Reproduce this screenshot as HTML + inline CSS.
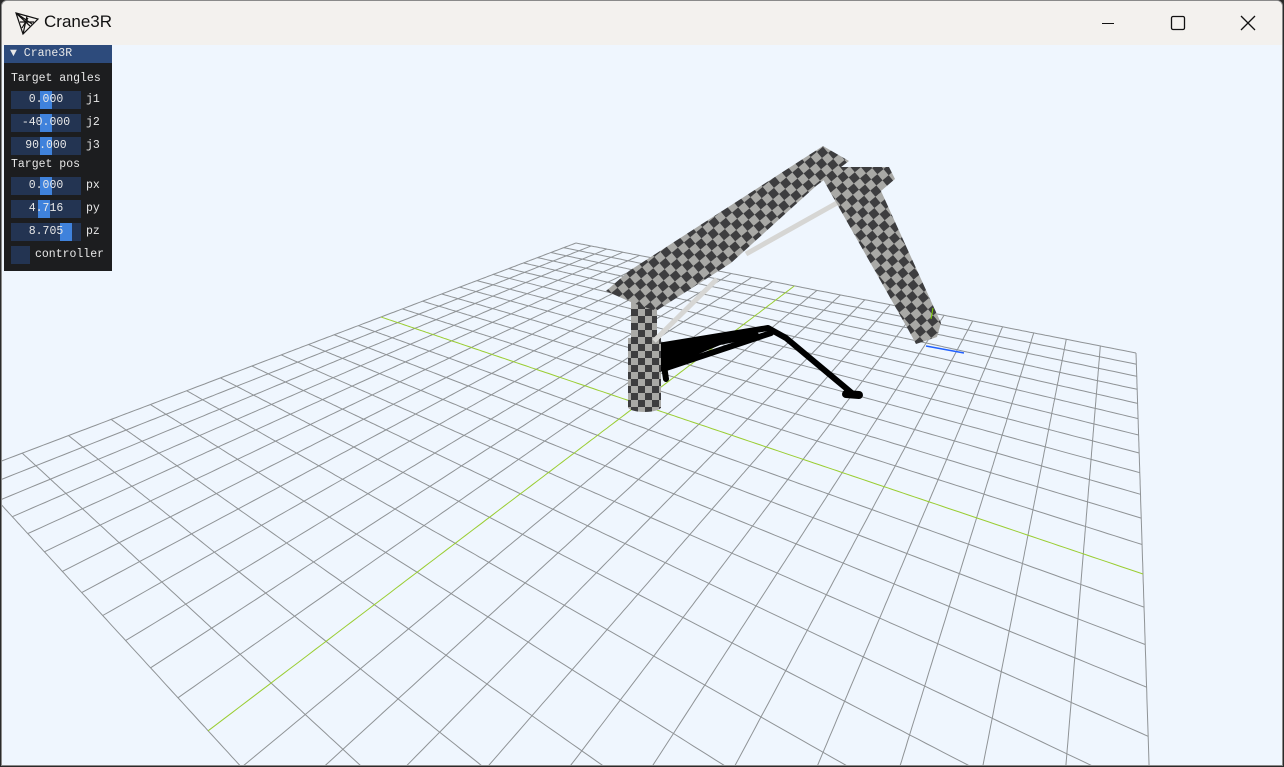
<!DOCTYPE html>
<html><head><meta charset="utf-8"><style>
html,body{margin:0;padding:0;width:1284px;height:767px;overflow:hidden;background:#2a2a2a;font-family:"Liberation Sans",sans-serif}
#win{position:absolute;left:1px;top:0;width:1282px;height:766px;background:#eff6fe;border:1px solid #8a8a8a;box-sizing:border-box;border-radius:6px 6px 0 0;overflow:hidden}
#title{position:absolute;left:0;top:0;width:100%;height:44px;background:#f3f1ee}
#title .t{position:absolute;left:42px;top:11px;font-size:17px;color:#111}
#panel{position:absolute;left:2px;top:44px;width:108px;height:226px;background:#1c1d1f;font-family:"Liberation Mono",monospace;font-size:11.5px;color:#e8e8e8}
#hdr{height:18px;background:#2d4b7c;line-height:18px;padding-left:6px}
.lbl{position:absolute;left:7px}
.inp{position:absolute;left:7px;width:70px;height:18px;background:#233452;text-align:center;line-height:18px}
.grab{position:absolute;top:0;height:18px;width:12px;background:#3f82dc}
.inp span{position:relative}
.sfx{position:absolute;left:82px}
</style></head><body>
<div id="win">
<svg id="scene" width="1284" height="767" style="position:absolute;left:-1px;top:0;overflow:hidden">
<defs>
<pattern id="chk" width="16" height="16" patternUnits="userSpaceOnUse" patternTransform="rotate(-40)">
<rect width="16" height="16" fill="#a9a9a6"/><rect width="8" height="8" fill="#3d3d3f"/><rect x="8" y="8" width="8" height="8" fill="#3d3d3f"/>
</pattern>
<pattern id="chk2" width="14" height="14" patternUnits="userSpaceOnUse">
<rect width="14" height="14" fill="#a9a9a6"/><rect width="7" height="7" fill="#3d3d3f"/><rect x="7" y="7" width="7" height="7" fill="#3d3d3f"/>
</pattern>
</defs>
<g id="grid" stroke="#8f9396" stroke-width="1" fill="none"></g>
<g id="axes"></g>
<!-- shadow -->
<g stroke="#000" stroke-width="6" stroke-linecap="round" stroke-linejoin="round" fill="none">
<polyline points="657,345 767,327 785,337 852,393"/>
<polyline points="662,368 770,332"/>
<polyline points="660,352 755,334"/>
<polyline points="660,345 665,378"/>
<line x1="845" y1="393" x2="858" y2="394" stroke-width="8"/>
</g>
<polygon points="660,342 765,325 700,352 662,372" fill="#000"/>
<!-- base -->
<rect x="627" y="337" width="33" height="70" fill="url(#chk2)"/>
<ellipse cx="643.5" cy="406" rx="16.5" ry="5" fill="url(#chk2)"/>
<rect x="630" y="300" width="26" height="40" fill="url(#chk2)"/>
<!-- rods -->
<line x1="653" y1="340" x2="716" y2="278" stroke="#d6d6d4" stroke-width="5"/>
<line x1="745" y1="253" x2="843" y2="198" stroke="#d6d6d4" stroke-width="5"/>
<!-- boom 1 -->
<polygon points="605,290 628,270 822,145 848,160 815,185 730,262 655,310 632,302" fill="url(#chk)"/>
<!-- boom 2 -->
<polygon points="815,166 870,166 888,166 894,178 880,190 940,322 936,336 915,343 908,330" fill="url(#chk)"/>
<line x1="930" y1="318" x2="932" y2="307" stroke="#7cd000" stroke-width="1"/>
<line x1="925" y1="345" x2="963" y2="352" stroke="#2060ff" stroke-width="1.5"/>
</svg>
<div id="title">
<svg style="position:absolute;left:12px;top:9px" width="26" height="26" viewBox="0 0 26 26" fill="none" stroke="#111" stroke-width="1.2"><path d="M2 3 L24 9 L9 24 Z M2 3 L16 16 M13 6 L9 24 M2 3 L18 14 M6 12 L20 12 M8 18 L14 8"/></svg>
<div class="t">Crane3R</div>
<svg style="position:absolute;left:1098px;top:14px" width="16" height="16"><line x1="2" y1="8.5" x2="14" y2="8.5" stroke="#111"/></svg>
<svg style="position:absolute;left:1167px;top:13px" width="18" height="18"><rect x="2.5" y="2.5" width="13" height="13" rx="1.5" fill="none" stroke="#111" stroke-width="1.3"/></svg>
<svg style="position:absolute;left:1237px;top:13px" width="18" height="18"><path d="M2 2 L16 16 M16 2 L2 16" stroke="#111" stroke-width="1.3"/></svg>
</div>
<div id="panel">
<div id="hdr">▼ Crane3R</div>
<div class="lbl" style="top:27px">Target angles</div>
<div class="inp" style="top:46px"><div class="grab" style="left:29px"></div><span>0.000</span></div><div class="sfx" style="top:48px">j1</div>
<div class="inp" style="top:69px"><div class="grab" style="left:29px"></div><span>-40.000</span></div><div class="sfx" style="top:71px">j2</div>
<div class="inp" style="top:92px"><div class="grab" style="left:29px"></div><span>90.000</span></div><div class="sfx" style="top:94px">j3</div>
<div class="lbl" style="top:113px">Target pos</div>
<div class="inp" style="top:132px"><div class="grab" style="left:29px"></div><span>0.000</span></div><div class="sfx" style="top:134px">px</div>
<div class="inp" style="top:155px"><div class="grab" style="left:27px"></div><span>4.716</span></div><div class="sfx" style="top:157px">py</div>
<div class="inp" style="top:178px"><div class="grab" style="left:49px"></div><span>8.705</span></div><div class="sfx" style="top:180px">pz</div>
<div class="inp" style="top:201px;width:19px"></div><div class="lbl" style="top:203px;left:31px">controller</div>
</div>
</div>
<script>
(function(){
var src=[[-1,-1],[1,-1],[-1,0],[1,0]], dst=[[575,242],[1135,352],[380,316],[1142,573]];
var A=[],b=[];
for(var i=0;i<4;i++){var u=src[i][0],v=src[i][1],x=dst[i][0],y=dst[i][1];
A.push([u,v,1,0,0,0,-u*x,-v*x]);b.push(x);
A.push([0,0,0,u,v,1,-u*y,-v*y]);b.push(y);}
var n=8;for(var c=0;c<n;c++){var p=c;for(var r=c+1;r<n;r++)if(Math.abs(A[r][c])>Math.abs(A[p][c]))p=r;
var t=A[c];A[c]=A[p];A[p]=t;t=b[c];b[c]=b[p];b[p]=t;
for(var r=0;r<n;r++)if(r!=c){var f=A[r][c]/A[c][c];for(var k=c;k<n;k++)A[r][k]-=f*A[c][k];b[r]-=f*b[c];}}
var h=[];for(var i=0;i<8;i++)h.push(b[i]/A[i][i]);
function P(u,v){var w=h[6]*u+h[7]*v+1;return [(h[0]*u+h[1]*v+h[2])/w,(h[3]*u+h[4]*v+h[5])/w,w];}
var N=12,g=document.getElementById('grid'),ax=document.getElementById('axes'),s='';
function seg(u0,v0,u1,v1,col){var pts=[];for(var i=0;i<=200;i++){var u=u0+(u1-u0)*i/200,v=v0+(v1-v0)*i/200;var q=P(u,v);if(q[2]<0.02)break;if(q[1]>800)break;pts.push(q[0].toFixed(1)+','+q[1].toFixed(1));}
return '<polyline points="'+pts.join(' ')+'"'+(col?' stroke="'+col+'"':'')+'/>';}
for(var k=-N;k<=N;k++){var a=k/N;
if(k==0)continue;
s+=seg(a,-1,a,1);s+=seg(-1,a,1,a);}
g.innerHTML=s;
ax.innerHTML=seg(0,-1,0,1,'#9acd32')+seg(-1,0,1,0,'#9acd32');
ax.setAttribute('fill','none');
})();
</script>
</body></html>
